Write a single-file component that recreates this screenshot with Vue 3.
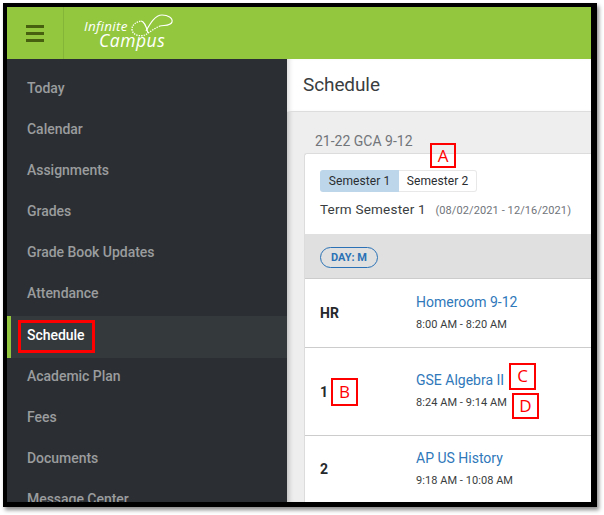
<script setup>
const nav = ['Today','Calendar','Assignments','Grades','Grade Book Updates','Attendance','Schedule','Academic Plan','Fees','Documents','Message Center']
const rows = [
  { id:'HR', name:'Homeroom 9-12', time:'8:00 AM - 8:20 AM', cls:'h69' },
  { id:'1', name:'GSE Algebra II', time:'8:24 AM - 9:14 AM', cls:'h88' },
  { id:'2', name:'AP US History', time:'9:18 AM - 10:08 AM', cls:'h66' },
]
</script>

<template>
  <div class="page">
    <div class="frame">
      <header class="topbar">
        <button class="burger" aria-label="Menu"><i></i><i></i><i></i></button>
        <div class="logo">
          <span class="inf">Infinite</span>
          <span class="cam">Campus</span>
          <svg class="swoosh" viewBox="0 0 44 24" width="44" height="24" fill="none" stroke="#fff">
            <path d="M15 18C19 11 24 2 31 2C37 2 42 5 41 9C40 13 33 12 29 13" stroke-width="1.1"/>
            <path d="M29 13C24 15 19 19 14 22C9 24 1 22 1 16C1 12 5 9 10 8" stroke-width="1.3" stroke-dasharray="1.4 1.1"/>
            <path d="M10 8C12 8 15 12 17 20" stroke-width="1.1"/>
          </svg>
        </div>
      </header>
      <div class="body">
        <aside class="side">
          <a v-for="n in nav" :key="n" class="item" :class="{ active: n === 'Schedule' }">{{ n }}</a>
        </aside>
        <main class="main">
          <div class="title">Schedule</div>
          <div class="content">
            <div class="year">21-22 GCA 9-12</div>
            <section class="card">
              <div class="terms">
                <div class="seg"><span class="on">Semester 1</span><span class="off">Semester 2</span></div>
                <div class="term">Term Semester 1 <small>(08/02/2021 - 12/16/2021)</small></div>
              </div>
              <div class="band"><span class="pill">DAY: M</span></div>
              <div v-for="r in rows" :key="r.id" class="row" :class="r.cls">
                <div class="pid">{{ r.id }}</div>
                <div class="info">
                  <a class="course">{{ r.name }}</a>
                  <div class="time">{{ r.time }}</div>
                </div>
              </div>
            </section>
          </div>
        </main>
      </div>
      <span class="mark schedmark"></span>
      <span class="mark lbl a">A</span>
      <span class="mark lbl b">B</span>
      <span class="mark lbl c">C</span>
      <span class="mark lbl d">D</span>
    </div>
  </div>
</template>

<style scoped>
.page { width: 604px; height: 515px; background: #fff; padding: 3px 7px 8px 3px; box-sizing: border-box; overflow: hidden; }
.frame { position: relative; width: 594px; height: 504px; border: solid #000; border-width: 4px 6px 5px 4px; box-sizing: border-box; box-shadow: 2px 3px 4px rgba(0,0,0,.45); display: flex; flex-direction: column; overflow: hidden; font-family: Roboto, sans-serif; background: #fff; }
.topbar { height: 52px; flex: none; background: #93c83e; display: flex; align-items: center; }
.burger { width: 57px; height: 52px; padding: 0 0 0 19px; border: 0; border-right: 1px solid #85b538; background: none; display: flex; flex-direction: column; justify-content: center; align-items: flex-start; gap: 4px; box-sizing: border-box; }
.burger i { display: block; width: 18px; height: 3px; background: #46600f; }
.logo { position: relative; width: 100px; height: 52px; margin-left: 20px; color: #fff; font-family: "Open Sans", sans-serif; font-style: italic; }
.inf { position: absolute; left: 0; top: 13px; font-size: 13.5px; letter-spacing: .3px; line-height: 12px; }
.cam { position: absolute; left: 15px; top: 26px; font-size: 17.5px; letter-spacing: .5px; line-height: 14px; }
.swoosh { position: absolute; left: 47px; top: 6px; }
.body { flex: 1; display: flex; min-height: 0; }
.side { width: 280px; flex: none; background: #2b2f33; padding-top: 11px; box-sizing: border-box; display: flex; flex-direction: column; overflow: hidden; }
.item { flex: none; height: 41.09px; line-height: 37px; padding-left: 20px; font-size: 14px; font-weight: 500; color: #9a9c9e; letter-spacing: -.03px; box-sizing: border-box; }
.item.active { background: #34393c; color: #fff; border-left: 4px solid #93c83e; padding-left: 16px; line-height: 39px; }
.main { flex: 1; min-width: 0; background: #eee; display: flex; flex-direction: column; box-shadow: inset 5px 0 5px -3px rgba(0,0,0,.2); }
.title { height: 53px; flex: none; background: #fff; border-bottom: 1px solid #ddd; box-sizing: border-box; font-size: 19px; color: #3a3d40; padding-left: 16px; line-height: 52px; letter-spacing: -.1px; box-shadow: inset 5px 0 5px -3px rgba(0,0,0,.15); }
.content { flex: 1; min-height: 0; padding: 21px 0 0 17px; }
.year { font-size: 14px; color: #72757a; padding-left: 11px; height: 20px; line-height: 17px; }
.card { background: #fff; border: 1px solid #dcdcdc; border-right: 0; border-bottom: 0; border-radius: 3px 0 0 0; height: 400px; }
.terms { height: 80px; padding: 16px 0 0 15px; box-sizing: border-box; }
.seg { display: inline-flex; height: 22px; font-size: 12px; line-height: 22px; color: #2a2d30; letter-spacing: .08px; }
.on { width: 79px; text-align: center; background: #bdd6ea; border-radius: 3px 0 0 3px; }
.off { width: 78px; text-align: center; border: 1px solid #e8e8e8; border-left: 0; border-radius: 0 3px 3px 0; box-sizing: border-box; line-height: 20px; }
.term { font-size: 13.5px; color: #3a3d40; margin-top: 7px; line-height: 20px; letter-spacing: .22px; }
.term small { font-size: 11px; color: #70747a; margin-left: 6px; letter-spacing: .1px; }
.band { height: 45px; background: #e0e0e0; border-bottom: 1px solid #ccc; box-sizing: border-box; padding: 12px 0 0 15px; }
.pill { display: inline-block; width: 58px; height: 21px; line-height: 19px; box-sizing: border-box; text-align: center; border: 1px solid #2a72b5; border-radius: 11px; font-size: 11px; font-weight: 700; color: #2a72b5; }
.row { display: flex; align-items: center; border-bottom: 1px solid #ccc; box-sizing: border-box; padding-left: 15px; }
.h69 { height: 69px; }
.h88 { height: 88px; }
.h66 { height: 66px; border-bottom: 0; }
.pid { width: 96px; font-size: 14px; font-weight: 700; color: #26292c; flex: none; }
.info { margin-top: -2px; }
.course { display: block; font-size: 14px; color: #2f78ba; line-height: 18px; }
.time { font-size: 11px; color: #3a3d40; margin-top: 7px; line-height: 14px; letter-spacing: .05px; }
.mark { position: absolute; box-sizing: border-box; border: 2px solid #f00; }
.schedmark { left: 11px; top: 313px; width: 77px; height: 33px; border-width: 3px; }
.lbl { color: #f00; font-family: "Open Sans", sans-serif; font-size: 17px; text-align: center; line-height: 22px; }
.a { left: 423px; top: 136px; width: 26px; height: 25px; }
.b { left: 324px; top: 371px; width: 27px; height: 28px; line-height: 24px; }
.c { left: 502px; top: 356px; width: 27px; height: 27px; }
.d { left: 505px; top: 386px; width: 27px; height: 26px; }
</style>
